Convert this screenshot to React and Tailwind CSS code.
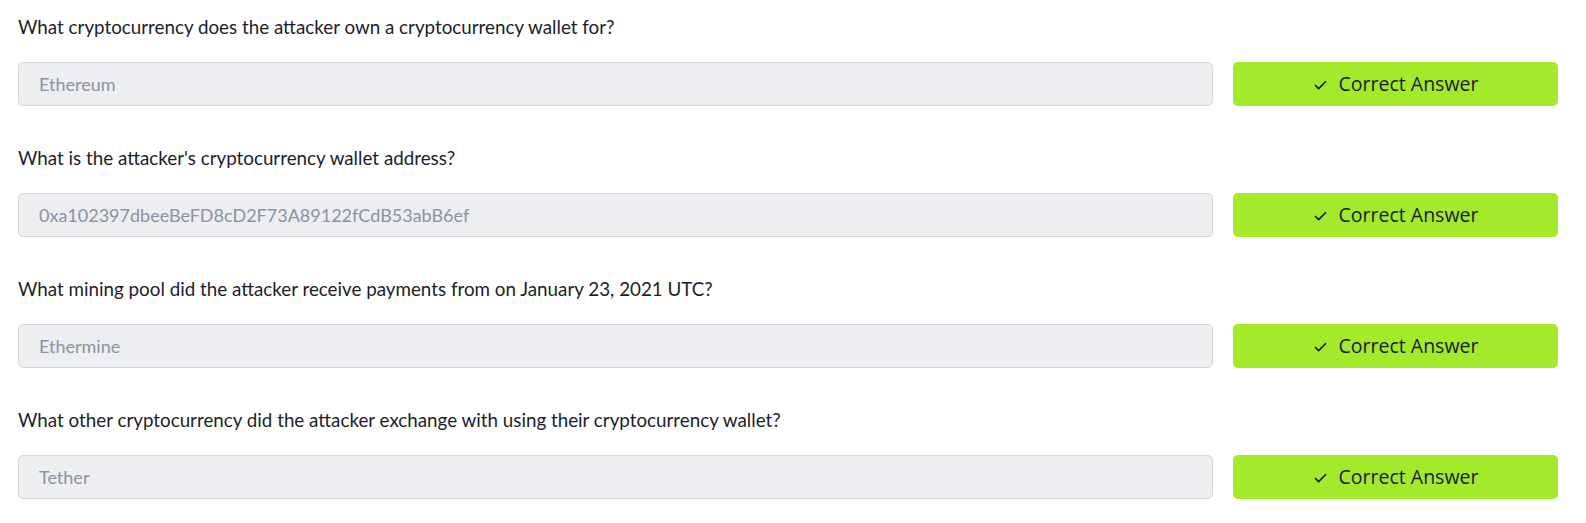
import { Check } from 'lucide-react'

const questions = [
  { q: 'What cryptocurrency does the attacker own a cryptocurrency wallet for?', a: 'Ethereum' },
  { q: "What is the attacker's cryptocurrency wallet address?", a: '0xa102397dbeeBeFD8cD2F73A89122fCdB53abB6ef' },
  { q: 'What mining pool did the attacker receive payments from on January 23, 2021 UTC?', a: 'Ethermine' },
  { q: 'What other cryptocurrency did the attacker exchange with using their cryptocurrency wallet?', a: 'Tether' },
]

export default function App() {
  return (
    <div className="min-h-screen bg-white pl-[18px] pr-[28px] pt-[13px] font-['Lato',sans-serif]">
      {questions.map((item, i) => (
        <div key={i} className="mb-[38px]">
          <p className="mb-[21px] text-[18.8px] leading-[28px] text-[#1c1e2b]">{item.q}</p>
          <div className="flex h-[44px] gap-[20px]">
            <div className="flex flex-1 items-center rounded-[5px] border border-[#d3d6dd] bg-[#eceef2] px-[20px] text-[18px] text-[#8a92a4]">
              {item.a}
            </div>
            <button className="flex w-[325px] items-center justify-center gap-[11px] rounded-[5px] bg-[#a3ea2a] text-[19.5px] text-[#1b1a28] font-['Open_Sans',sans-serif]">
              <Check className="mt-[2px] h-[15px] w-[15px]" strokeWidth={2.75} />
              Correct Answer
            </button>
          </div>
        </div>
      ))}
    </div>
  )
}
